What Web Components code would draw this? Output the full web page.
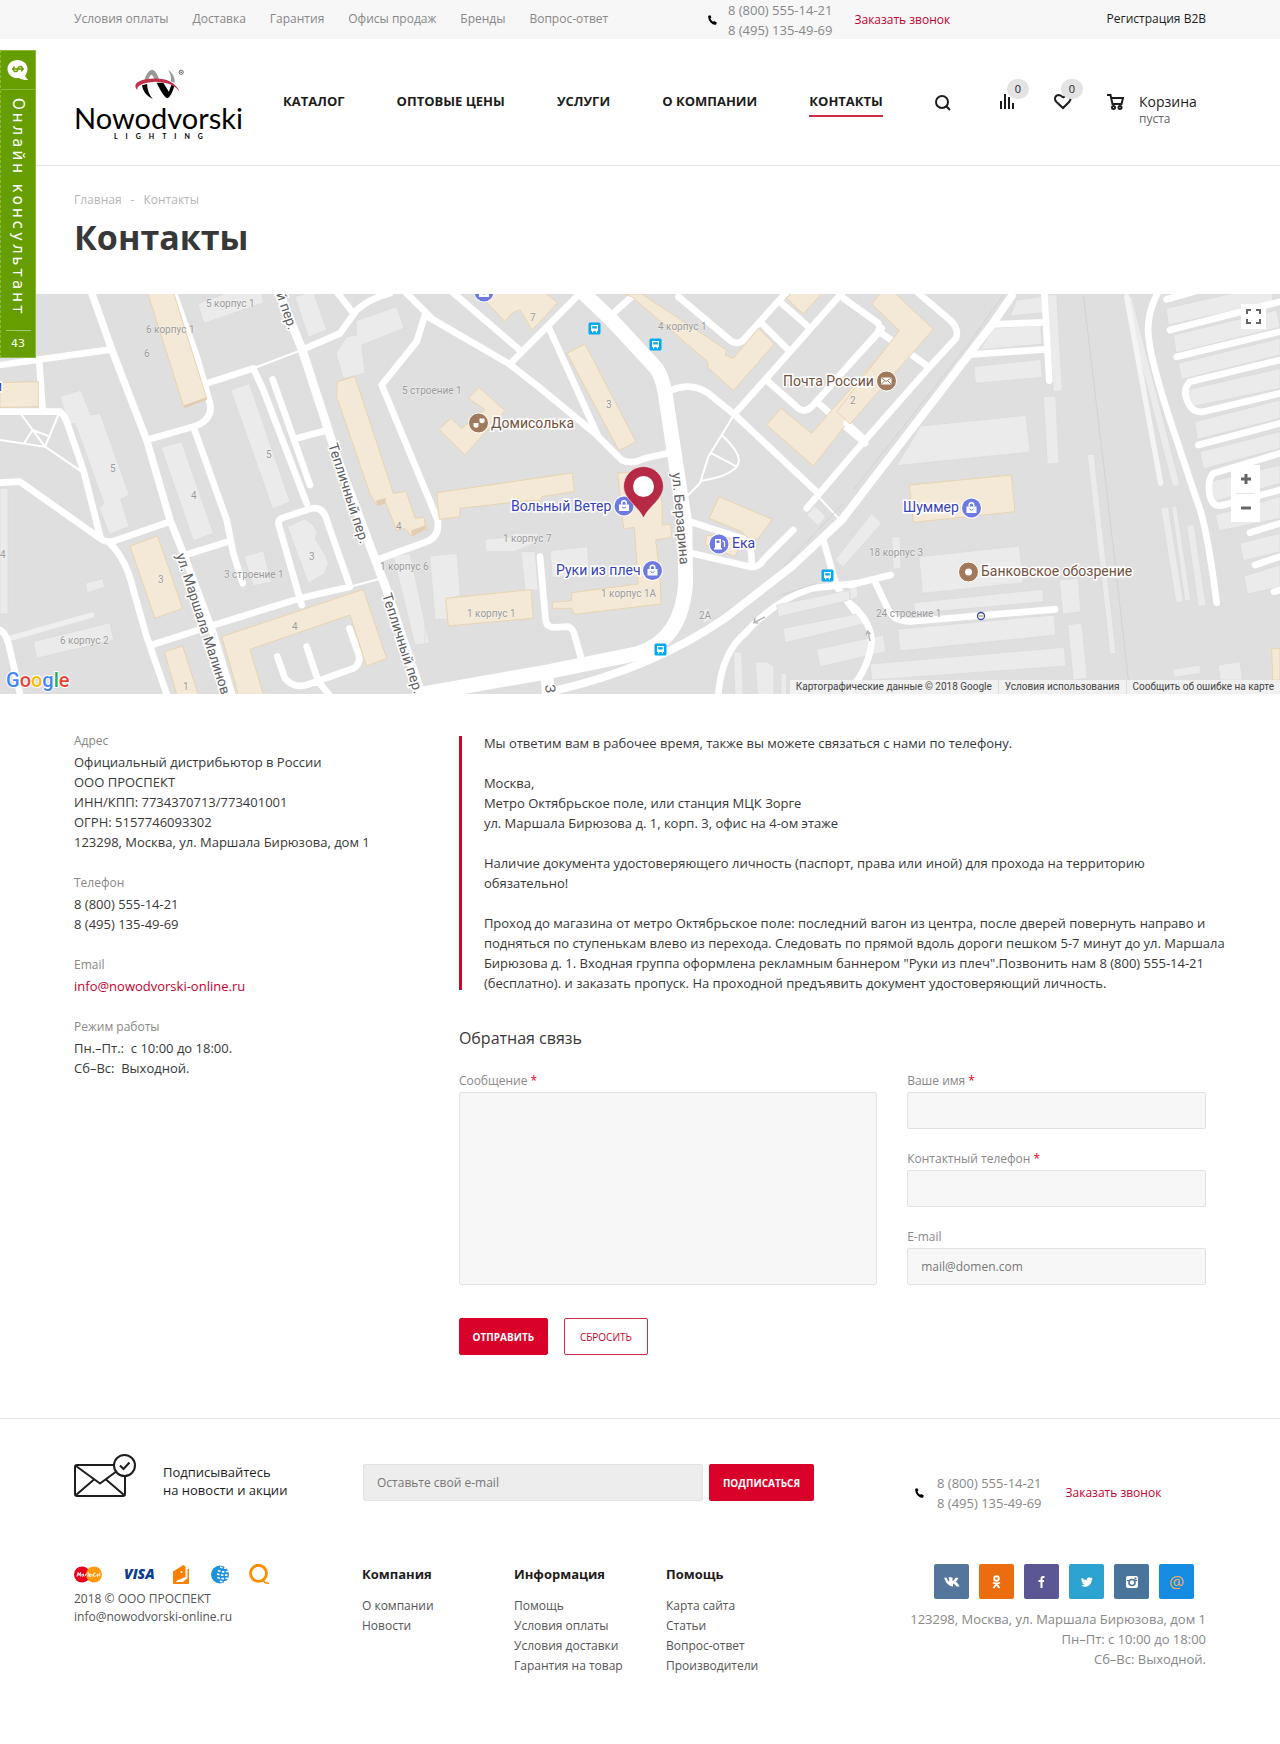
<!DOCTYPE html>
<html lang="ru">
<head>
<meta charset="utf-8">
<meta name="viewport" content="width=device-width, initial-scale=1">
<title>Контакты</title>
<style>
:root{--font:"Open Sans","Noto Sans",sans-serif;--accent:#d90029;--link:#c5002d;--muted:#888;--text:#383838;--line:#e5e5e5;--gutter:74px}
body{margin:0;background:#fff;font:13px/20px var(--font);color:var(--text)}
</style>
</head>
<body>
<contacts-page></contacts-page>
<script>
const define = (name, css, html) => customElements.define(name, class extends HTMLElement {
  constructor() {
    super();
    this.attachShadow({ mode: 'open' }).innerHTML =
      `<style>*{box-sizing:border-box}a{color:inherit;text-decoration:none}ul{list-style:none;margin:0;padding:0}svg{display:block}button,input,textarea{font:inherit}:host{display:block}${css}</style>${html}`;
  }
});

/* phone numbers with a call-back link */
define('phone-block', `
:host{display:flex;align-items:center}
svg{flex:none;margin-right:var(--icon-gap,11px)}
.n{display:grid;color:#888;font-size:13px;line-height:20px;white-space:nowrap}
.c{margin-left:var(--link-gap,22px);font-size:12px;color:var(--link);white-space:nowrap}`,
`<svg width="9" height="10" viewBox="0 0 9 10"><path d="M0.3 0.8 L2.4 0.2 L3.4 2.6 L2.4 3.6 Q3 5.6 5 6.8 L6.2 6 L8.8 7.4 L8.2 9.4 Q5.6 10.4 2.6 7.4 Q-.4 4 .3 .8Z" fill="#000"/></svg>
<span class="n"><a href="#">8 (800) 555-14-21</a><a href="#">8 (495) 135-49-69</a></span><a class="c" href="#">Заказать звонок</a>`);

define('site-topbar', `
:host{background:#f7f7f7;height:39px;padding:0 var(--gutter);display:grid;grid-template-columns:56% 1fr auto;font-size:12px;color:var(--muted)}
ul{display:flex;gap:24px;line-height:38px;white-space:nowrap}
.reg{line-height:38px;color:#1d1d1d}`,
`<nav><ul><li><a href="#">Условия оплаты</a></li><li><a href="#">Доставка</a></li><li><a href="#">Гарантия</a></li><li><a href="#">Офисы продаж</a></li><li><a href="#">Бренды</a></li><li><a href="#">Вопрос-ответ</a></li></ul></nav>
<phone-block></phone-block><a class="reg" href="#">Регистрация B2B</a>`);

define('brand-logo', `
a{display:grid;justify-items:center;width:165px;color:#000}
.w{font:29px/26px Lato,sans-serif}
.l{font:700 7px/10px Lato,sans-serif;letter-spacing:8px;padding-left:8px}
svg{margin-bottom:5px}`,
`<a href="#"><svg width="51" height="31" viewBox="0 0 54 38" preserveAspectRatio="none">
<path d="M11.500 15 Q15 2 20 1 Q24 1 27.500 12 L23 12.500 Q20.500 7 19.500 7 Q17.500 8 16 14Z" fill="#999"/>
<path d="M37 1 Q45 7 44 17 L40 15 Q41 7 37 1Z" fill="#999"/>
<path d="M9.500 20 L15 18.500 Q15 29 21 37 Q10.500 31 9.500 20Z" fill="#000"/>
<path d="M25 17 L32 17 L38 28 L41 18.500 L44 20 Q41 33 36.500 36 Q33 36 25 17Z" fill="#000"/>
<path d="M4.500 26 Q-3 15 18 12 Q42 9.500 49.500 28 Q42 15.500 23 15.500 Q3 17.500 4.500 26Z" fill="#c3304a"/>
<ellipse cx="51" cy="4" rx="2.200" ry="2.600" fill="none" stroke="#555" stroke-width="1"/><circle cx="51" cy="4" r=".9" fill="#555"/></svg>
<span class="w">Nowodvorski</span><span class="l">LIGHTING</span></a>`);

/* header icon with a round counter */
define('count-icon', `
:host{position:relative}
.b{position:absolute;left:7px;top:-15px;min-width:22px;height:20px;border-radius:10px;background:#e3e3e3;color:#1d1d1d;font-size:11px;line-height:20px;text-align:center}`,
`<slot></slot><span class="b">0</span>`);

define('site-header', `
:host{height:127px;border-bottom:1px solid var(--line);padding:0 var(--gutter);display:flex;align-items:flex-start}
brand-logo{margin-top:30px;flex:none}
nav{flex:1;margin:53px 49px 0 44px;display:flex;justify-content:space-between;font-weight:700;font-size:13px;line-height:18px;color:#1d1d1d;white-space:nowrap}
nav a{padding-bottom:5px;height:25px}
nav a.on{border-bottom:2px solid #d02a49}
button{border:0;background:none;padding:0;margin:3px 0 0;height:16px;width:16px}
.t{display:grid;grid-template-columns:54px 53px 99px;margin-top:55px}
.cart{display:flex;gap:15px;font-size:14px;line-height:16px;color:#1d1d1d}
.cart small{display:block;font-size:12px;line-height:18px;color:#666}`,
`<brand-logo></brand-logo>
<nav><a href="#">КАТАЛОГ</a><a href="#">ОПТОВЫЕ ЦЕНЫ</a><a href="#">УСЛУГИ</a><a href="#">О КОМПАНИИ</a><a class="on" href="#">КОНТАКТЫ</a>
<button aria-label="Поиск"><svg width="16" height="16" viewBox="0 0 16 16" fill="none" stroke="#1d1d1d" stroke-width="2"><circle cx="7" cy="7" r="6"/><path d="M11.300 11.300 L15 15"/></svg></button></nav>
<div class="t"><count-icon><svg width="15" height="16" viewBox="0 0 15 16" style="display:block" fill="#1d1d1d"><path d="M0 7h2v8H0zM4 0h2v15H4zM8 3h2v12H8zM12 9h2v6h-2z"/></svg></count-icon>
<count-icon><svg width="18" height="16" viewBox="0 0 18 16" style="display:block" fill="none" stroke="#1d1d1d" stroke-width="2"><path d="M9 3.500 Q7 1 4.600 1 Q1 1.500 1 5 Q1 6.500 2.500 8 L9 14 L15.500 7.500 Q17 5.500 16.500 3.500 Q15 .5 12 1.500 Q10.500 2 9 4"/></svg></count-icon>
<a class="cart" href="#"><svg width="17" height="16" viewBox="0 0 17 16" fill="none" stroke="#1d1d1d" stroke-width="2"><path d="M0 1 H3.500 L5.500 10 H14.500 L16 4 H4.500"/><circle cx="6.500" cy="13.500" r="1.500"/><circle cx="13" cy="13.500" r="1.500"/></svg><span>Корзина<small>пуста</small></span></a></div>`);

define('page-title', `
:host{padding:24px var(--gutter) 0;height:128px}
nav{display:flex;gap:9px;font-size:12px;line-height:20px;color:#b6b6b6}
h1{margin:9px 0 0;font-size:34px;line-height:36px;font-weight:700;color:#383838}`,
`<nav><a href="#">Главная</a><span>-</span><span>Контакты</span></nav><h1>Контакты</h1>`);

/* vertical chat tab */
define('chat-tab', `
:host{position:absolute;left:0;top:50px;width:36px;height:308px;background:#669e02;border:1px solid #8ab73c;border-left:1px dashed #8ab73c;color:#fff}
button{all:unset;box-sizing:border-box;display:flex;flex-direction:column;align-items:center;width:100%;height:100%;cursor:pointer}
.i{height:39px;width:100%;border-bottom:1px solid #8ab73c;display:grid;place-items:center}
.v{writing-mode:vertical-rl;flex:1;font:15px/30px "DejaVu Sans",sans-serif;letter-spacing:3px;white-space:nowrap;padding-top:8px}
.n{width:25px;border-top:1px solid #a5c96a;text-align:center;font:11px/26px "DejaVu Sans",sans-serif}`,
`<button><span class="i"><svg width="22" height="22" viewBox="0 0 22 22"><path d="M10.500 1 C16 1 20.500 4.500 20.500 10 C20.500 13 19 15.500 18 17 L21 21 Q15 21 12 19 C5 20 .5 15 .5 10 C.5 4.500 5 1 10.500 1Z" fill="#fff"/><path d="M5 10 H17 M7.500 7.500 Q5 11.500 8 12.500 Q10.500 13 11 10 Q11.500 7 14 7.500 Q16.500 8.500 14.500 12.500" fill="none" stroke="#669e02" stroke-width="1.500"/></svg></span>
<span class="v">Онлайн консультант</span><span class="n">43</span></button>`);

define('contacts-map', `
:host{position:relative;height:400px;background:#dfdfdf;overflow:hidden}
.map{width:100%;height:400px}
.r{fill:none;stroke:#fff;stroke-width:20;stroke-linecap:round;stroke-linejoin:round}
.g{fill:#ebebeb;stroke:#d9d9d9;stroke-width:2}
.y{fill:#f3e9d6;stroke:#e9d3b0;stroke-width:3}
.s{font:10px Roboto,sans-serif;fill:#999;stroke:#fff;stroke-width:1px;paint-order:stroke;stroke-opacity:.5}
.p{font:14px Roboto,sans-serif;stroke:#fff;stroke-width:3px;paint-order:stroke}
.st{font:14px Roboto,sans-serif;fill:#5f5f5f;stroke:#fff;stroke-width:3px;paint-order:stroke}
.b{fill:#3642b8}.w{fill:#74523d}
.lg{font:500 20px Roboto,sans-serif;stroke:#fff;stroke-width:2px;paint-order:stroke}
.full,.zoom{position:absolute;right:14px;background:#fff}
button{border:0;padding:0;background:#fff;display:grid;place-items:center}
.full{top:10px;width:25px;height:25px}
.zoom{top:171px;right:20px;width:29px}
.zoom button{width:29px;height:28px}
.zoom hr{margin:0 5px;border:0;border-top:1px solid #e6e6e6}
.legal{position:absolute;right:0;bottom:0;display:flex;height:14px;background:rgba(245,245,245,.8);font:10px/14px Roboto,sans-serif;color:#444;white-space:nowrap}
.legal a{padding:0 6px}.legal a+a{border-left:1px solid #ddd}`,
`<svg class="map" viewBox="0 0 1280 400" preserveAspectRatio="xMidYMid slice">
<defs>
<g id="bus"><rect x="-6" y="-6" width="12" height="12" rx="1.500" fill="#03a9f4"/><path d="M-3.500 -3.500h7v6h-1v1.500h-1.300v-1.500h-2.400v1.500h-1.300v-1.500h-1z" fill="#fff"/><path d="M-2.300 -2.300h4.600v2.300h-4.600z" fill="#03a9f4"/></g>
<g id="bag"><circle r="10.500" fill="#fff"/><circle r="9.500" fill="#6f7ae0"/><path d="M-5 -1.500h10v6.500h-10z" fill="#fff"/><path d="M-2.300 -1.500v-1.500a2.300 2.300 0 0 1 4.600 0v1.500" fill="none" stroke="#fff" stroke-width="1.500"/><path d="M-2 1q2 2.500 4 0" fill="none" stroke="#6f7ae0"/></g>
</defs>
<g transform="translate(0 -4) scale(.33333)">
 <g class="g">
  <path d="M593 40L680 10H785L792 38L612 100ZM885 20L940 5L980 120L925 142ZM1068 92L1190 50L1212 115L1085 165L1095 250L1030 265L1008 190L1040 140L1070 135ZM180 320L242 300L272 375L300 370L388 615L362 628L387 710L328 732L298 655L312 640L225 400L208 405ZM483 472L545 455L640 730L580 752ZM692 300L748 280L870 635L818 657ZM0 595H24V972H0ZM255 880L308 866L314 892L262 908ZM100 1055L330 998L341 1050L110 1105ZM732 800L790 782L815 875L760 888ZM862 710L915 686L940 705L952 730L945 745L978 800L985 820L975 850L925 880ZM1180 800L1230 790L1288 1060L1245 1065Z"/>
 </g>
 <g class="r">
  <path stroke="#efefef" stroke-width="16" d="M30 1045L275 975"/>
  <path stroke-width="6" d="M65 375L98 420L135 470L245 545M175 375L135 470L0 450M98 420L72 460M98 420L150 440M760 235L905 180M1050 890L1135 868"/>
  <path d="M272 0L335 178L440 450L510 690L550 790L640 1030L700 1230" stroke-width="22"/>
  <path d="M0 225L335 178M118 220L128 360M0 365H180Q192 375 200 395L250 540L302 745M0 578L60 575L300 745Q320 760 345 752L510 695M330 760Q380 810 400 900L440 1040L500 1212M455 1065L610 1015L900 925L1050 890M440 450L580 410Q640 390 630 340L590 200L518 0M580 410L680 690L700 790L728 880M555 795L685 755M620 280L760 235L790 300L920 640M905 180L1020 130L1070 60Q1110 25 1170 10M1010 5L1060 70M818 268L930 585M890 445L985 420M905 945L835 700Q835 687 850 683L935 655Q970 650 980 690L1050 890M832 1100L855 1165Q880 1195 920 1185L1060 1135Q1085 1120 1075 1090L1048 1015M920 1070L955 1175L1000 1230M0 1020Q20 1030 30 1080L60 1212M1210 0L1290 80M1275 75L1250 155L1145 285L1313 690Q1320 740 1280 755L1130 810"/>
  <path stroke-width="26" d="M830 -10L905 175L985 420L1010 500L1100 740L1160 900L1270 1230"/>
 </g>
 <g class="y">
  <path d="M440 0L520 5L620 325L552 352ZM0 278L115 275V350L0 352ZM390 768L473 738L548 955L465 985ZM493 1085L548 1068L600 1230H535ZM665 1040L1090 898L1160 1105L1100 1128L1050 975L750 1078L795 1230H720ZM1012 275L1065 260L1180 610L1218 604L1246 685L1272 682L1280 715L1236 738L1215 715L1190 722L1158 640L1130 645L1110 612L1010 320Z"/>
  <path d="M552 346L620 322V330L554 354ZM1128 632L1157 624V640L1132 648ZM1232 722L1280 704V716L1238 738Z" fill="#e3cdb2" stroke="none"/>
 </g>
</g>
<g transform="translate(425 -4) scale(.33333)">
 <g class="g">
  <path d="M180 748L262 740V730H340V755L268 785H182ZM14 798L96 790L106 915L66 930L70 988H30ZM288 785H330L340 900H300ZM375 782L488 770L492 850L382 862ZM1145 675L1170 648L1202 680L1180 708ZM830 962L850 955L860 990L835 1000ZM925 1086H950L955 1230H930ZM990 1116H1025L1047 1130V1230H1000ZM1068 1150H1085V1230H1068ZM1230 810L1340 670L1370 700L1255 830ZM0 1000L14 1060H0Z"/>
 </g>
 <g class="r">
  <path stroke-width="6" d="M930 370L850 500L825 580L790 615M890 435Q960 500 935 530Q910 560 830 572M860 490L935 530M1180 620L1245 690"/>
  <path stroke-width="44" d="M455 -10L560 90L690 230Q715 260 725 340L780 700L782 880Q770 1050 640 1090L370 1145L-10 1212"/>
  <path stroke-width="38" d="M365 1150L370 1212"/>
  <path d="M0 75L250 220L340 290L510 430L590 510Q620 525 660 505L735 488M75 0L290 185M255 222L450 25L475 0M370 110L520 440M740 300Q800 275 850 310L930 375L1180 610M1250 10L1015 275L930 370M1065 35L1150 110M1010 100L1090 180M760 20L920 155Q945 165 960 145L1090 0M570 65L620 20M1030 275L1120 355Q1140 370 1160 350L1370 115M1180 340L1320 460M795 695L965 750Q982 770 980 830M800 790L975 830Q1000 835 1015 810L1105 720M345 800L362 990Q365 1015 390 1012L430 1010Q445 1015 450 1040L470 1110M1195 750L1235 890L1290 965M1290 880L1160 895Q1050 930 960 1030Q890 1090 880 1212"/>
 </g>
 <g class="y">
  <path d="M150 0H350L398 38L322 120L285 60L262 68L240 95ZM426 190L480 162L633 455L582 482ZM130 325L162 292L240 362L120 495L42 418L78 385L110 415L180 358ZM35 608L442 549L448 605L350 620V632H310L105 655V680L43 688ZM595 12H650L905 180L900 195L925 205L1000 115L1048 162L925 302L848 232V215L620 20ZM1025 405L1068 355L1160 430L1370 190L1400 230L1165 528ZM1085 25L1110 0H1200L1135 72ZM578 549L690 545L712 640V705L736 702L740 742L692 750L705 850L708 942L448 973L440 955L382 955V937L440 932V908L640 882L628 712L596 717ZM853 685L882 620L1042 688L1000 745L980 755L950 725ZM845 735L950 750L930 800L840 765ZM62 925L318 899L325 985L70 1008ZM0 690L5 720H0Z"/>
 </g>
</g>
<g transform="translate(850 -4) scale(.33333)">
 <path d="M460 15L350 170L10 600M-20 640L-200 830M700 15L770 600L840 1212M-100 880L-220 920" fill="none" stroke="#d2d2d2" stroke-width="3"/>
 <g class="g">
  <path d="M500 30L575 20L578 68L480 78ZM430 115L572 105L576 162L390 180ZM372 230L572 208L577 262L376 280ZM212 408L528 376L540 486L140 527ZM580 320L617 318L627 520L592 522ZM590 15H620L637 302L610 305ZM712 494L732 492L798 1090L780 1092ZM125 740H150L153 835L130 838ZM207 800L508 768L520 878L217 910ZM190 938L578 898L582 935L195 970ZM143 1018L612 975L617 1035L150 1083ZM60 1122L643 1072L648 1128L65 1170ZM628 870L685 865L692 965L638 972ZM653 1005L695 998L712 1165L670 1170ZM932 655L955 650L1000 935L978 938ZM965 650L980 648L1022 930L1005 935ZM1010 706L1032 704L1068 946L1045 950ZM820 15L845 20L990 585L968 590ZM968 1138L1050 1125L1052 1150L972 1162ZM1105 1125L1170 1115L1178 1170H1110ZM948 55L1260 -15L1270 35L955 105ZM970 135L1280 60L1290 112L978 188ZM985 220L1290 145V195L995 268ZM1010 300L1290 235V295L1025 350ZM1035 395L1290 330V385L1042 448ZM1050 485L1290 425V475L1060 537ZM1080 575L1290 525V580L1092 635ZM1097 675L1290 620V685L1107 722ZM1170 760L1290 730V785L1180 812ZM1182 858L1290 825V890L1192 912ZM0 885L20 880L24 920L0 930ZM-220 945L0 900V930L-215 980ZM-200 1015L40 968L48 1000L-195 1058ZM-100 1078L100 1035L108 1085L-90 1130Z"/>
 </g>
 <g class="r">
  <path stroke="#f4f4f4" stroke-width="16" d="M830 20L932 580"/>
  <path stroke-width="24" d="M485 18L425 105L-25 690L-175 830L-375 985Q-600 1140 -900 1205"/>
  <path d="M-130 655L15 485L235 235L318 145Q328 115 300 90L200 5M-20 25L85 100Q95 120 75 140L0 220M95 130L235 230M-10 400L45 450M430 103L585 97M370 193L585 178M583 10L598 272M0 885L122 855M75 875L115 960Q135 1000 200 993L615 958M925 5Q885 80 897 150Q905 220 960 390L1040 630Q1070 700 1100 938M950 28L1050 0M960 120L1290 35M980 200L1290 125M1290 210L1020 275Q995 300 1015 340Q1030 370 1060 365L1290 310M1045 465L1290 400M1290 490L1090 550Q1070 570 1080 620Q1090 655 1120 645L1290 600M1200 728L1290 700M1215 825L1290 800M1272 905L1290 900M0 940Q60 990 65 1050Q60 1130 0 1200"/>
 </g>
 <g class="y"><path d="M65 42L95 5H130L250 118L0 402L-40 365L148 122ZM178 585L484 555L495 665L190 697ZM1265 1076H1290V1170H1268Z"/></g>
</g>
<g class="s">
 <text x="206" y="13">5 корпус 1</text><text x="146" y="39">6 корпус 1</text><text x="144" y="63">6</text><text x="402" y="100">5 строение 1</text><text x="110" y="178">5</text><text x="191" y="205">4</text><text x="266" y="164">5</text><text x="158" y="289">3</text><text x="0" y="264">4</text><text x="224" y="284">3 строение 1</text><text x="309" y="266">3</text><text x="380" y="276">1 корпус 6</text><text x="60" y="350">6 корпус 2</text><text x="292" y="336">4</text><text x="396" y="236">4</text><text x="183" y="396">1</text><text x="530" y="27">7</text><text x="658" y="36">4 корпус 1</text><text x="606" y="114">3</text><text x="850" y="110">2</text><text x="503" y="248">1 корпус 7</text><text x="467" y="323">1 корпус 1</text><text x="601" y="303">1 корпус 1А</text><text x="699" y="325">2А</text><text x="869" y="262">18 корпус 3</text><text x="876" y="323">24 строение 1</text>
</g>
<g class="st">
 <text transform="translate(276 0) rotate(71)">й пер.</text>
 <text transform="translate(328 151) rotate(72)">Тепличный пер.</text>
 <text transform="translate(382 301) rotate(72)">Тепличный пер.</text>
 <text transform="translate(176 261) rotate(72)">ул. Маршала Малиновского</text>
 <text transform="translate(672 179) rotate(85)">ул. Берзарина</text>
 <text transform="translate(545 391) rotate(84)">З</text>
</g>
<g class="p b"><text x="511" y="217">Вольный Ветер</text><text x="556" y="281">Руки из плеч</text><text x="732" y="254">Ека</text><text x="903" y="218">Шуммер</text><text x="-6" y="97">и</text></g>
<g class="p w"><text x="491" y="134">Домисолька</text><text x="783" y="92">Почта России</text><text x="981" y="282">Банковское обозрение</text></g>
<use href="#bag" x="484" y="-2"/><use href="#bag" x="624" y="212"/><use href="#bag" x="652.500" y="276.500"/><use href="#bag" x="971.500" y="214"/>
<g transform="translate(719 250)"><circle r="10.500" fill="#fff"/><circle r="9.500" fill="#6f7ae0"/><path d="M-4 -5h6v9h1v1.500h-8v-1.500h1z" fill="#fff"/><path d="M-2.500 -3.500h3v2.500h-3z" fill="#6f7ae0"/><path d="M3.500 -3.500l2 1.500v5" fill="none" stroke="#fff" stroke-width="1.300"/></g>
<g fill="#a1795c" stroke="#fff"><circle cx="478.500" cy="129" r="10"/><circle cx="886.500" cy="87" r="10"/><circle cx="968.500" cy="278" r="10"/></g>
<path d="M473.500 129h5v3.500q-2.500 2.500-5 0zM479.500 124.500h5v3.500q-2.500 2.500-5 0z" fill="#fff"/>
<path d="M881 83.500h10.500v7h-10.500z" fill="#fff"/><path d="M881 83.500l5.200 4 5.300-4M881 90.500l4-4M891.500 90.500l-4-4" fill="none" stroke="#a1795c"/>
<circle cx="968.500" cy="278" r="3.500" fill="#fff"/>
<use href="#bus" x="594.500" y="34.500"/><use href="#bus" x="655.500" y="50.500"/><use href="#bus" x="827.500" y="281.500"/><use href="#bus" x="660.500" y="355.500"/>
<circle cx="981" cy="322" r="3.500" fill="#fff" stroke="#3949ab" stroke-width="1.300"/><path d="M979 322h4" stroke="#a1795c"/>
<path d="M765 323l-10 5m0-4l-1 4.500 4.500 .5M870 347l-2-9m-2 3l1.500-4 3 3" fill="none" stroke="#b5b5b5" stroke-width="1.500"/>
<path d="M643.500 224 C638 212 623.500 205 623.500 192.500 A20 20 0 0 1 663.500 192.500 C663.500 205 649 212 643.500 224Z" fill="#b62a46" stroke="#eee" stroke-opacity=".7"/><circle cx="643.500" cy="192.500" r="10.500" fill="#fff"/>
<text class="lg" x="6" y="393"><tspan fill="#4285f4">G</tspan><tspan fill="#ea4335">o</tspan><tspan fill="#fbbc05">o</tspan><tspan fill="#4285f4">g</tspan><tspan fill="#34a853">l</tspan><tspan fill="#ea4335">e</tspan></text>
</svg>
<button class="full" aria-label="Во весь экран"><svg width="15" height="15" fill="none" stroke="#666" stroke-width="2"><path d="M1 5V1h4M10 1h4v4M14 10v4h-4M5 14H1v-4"/></svg></button>
<div class="zoom"><button aria-label="Приблизить"><svg width="10" height="10" stroke="#666" stroke-width="3"><path d="M0 5h10M5 0v10"/></svg></button><hr><button aria-label="Отдалить"><svg width="10" height="10" stroke="#666" stroke-width="3"><path d="M0 5h10"/></svg></button></div>
<div class="legal"><a href="#">Картографические данные © 2018 Google</a><a href="#">Условия использования</a><a href="#">Сообщить об ошибке на карте</a></div>`);

define('info-item', `
:host{margin-bottom:20px}
.h{font-size:12px;line-height:22px;color:var(--muted)}`,
`<div class="h"><slot name="label"></slot></div><slot></slot>`);

define('office-note', `
:host{display:flex;gap:22px;margin-right:-24px}
i{flex:none;width:3px;margin:3px 0;background:var(--accent)}
p{margin:0 0 20px}p:last-child{margin:0}`,
`<i></i><div><p>Мы ответим вам в рабочее время, также вы можете связаться с нами по телефону.</p>
<p>Москва,<br>Метро Октябрьское поле, или станция МЦК Зорге<br>ул. Маршала Бирюзова д. 1, корп. 3, офис на 4-ом этаже</p>
<p>Наличие документа удостоверяющего личность (паспорт, права или иной) для прохода на территорию<br>обязательно!</p>
<p>Проход до магазина от метро Октябрьское поле: последний вагон из центра, после дверей повернуть направо и<br>подняться по ступенькам влево из перехода. Следовать по прямой вдоль дороги пешком 5-7 минут до ул. Маршала<br>Бирюзова д. 1. Входная группа оформлена рекламным баннером "Руки из плеч".Позвонить нам 8 (800) 555-14-21<br>(бесплатно). и заказать пропуск. На проходной предъявить документ удостоверяющий личность.</p></div>`);

define('feedback-form', `
:host{margin-top:35px}
h2{margin:0;font-size:16px;line-height:20px;font-weight:500;color:#383838}
.g{display:grid;grid-template-columns:7fr 5fr;gap:30px;margin-top:21px}
.f{display:flex;flex-direction:column}
.c{display:grid;gap:18px}
label{font-size:12px;line-height:23px;color:var(--muted)}
b{font-weight:400;color:#e2001f}
input,textarea{display:block;width:100%;height:37px;margin:0;padding:0 13px;border:1px solid #e2e2e2;border-radius:2px;background:#f7f7f7;font-size:12px;color:#333}
textarea{flex:1;resize:none}
::placeholder{color:#777;opacity:1}
.a{display:flex;gap:16px;margin-top:33px}
button{height:37px;min-width:89px;padding:0;border:1px solid var(--accent);border-radius:2px;background:var(--accent);color:#fff;font-size:10px;font-weight:700}
button[type=reset]{min-width:84px;background:#fff;border-color:#d02a49;color:var(--link);font-weight:500}`,
`<h2>Обратная связь</h2><form><div class="g"><div class="f"><label for="m">Сообщение <b>*</b></label><textarea id="m"></textarea></div>
<div class="c"><div class="f"><label for="n">Ваше имя <b>*</b></label><input id="n"></div><div class="f"><label for="p">Контактный телефон <b>*</b></label><input id="p" type="tel"></div><div class="f"><label for="e">E-mail</label><input id="e" type="email" placeholder="mail@domen.com"></div></div></div>
<div class="a"><button type="button">ОТПРАВИТЬ</button><button type="reset">СБРОСИТЬ</button></div></form>`);

define('contacts-main', `
:host{display:grid;grid-template-columns:34% 66%;padding:36px var(--gutter) 63px}
a{color:var(--link)}
.r{padding-top:3px}`,
`<section><info-item><span slot="label">Адрес</span>Официальный дистрибьютор в России<br>ООО ПРОСПЕКТ<br>ИНН/КПП: 7734370713/773401001<br>ОГРН: 5157746093302<br>123298, Москва, ул. Маршала Бирюзова, дом 1</info-item>
<info-item><span slot="label">Телефон</span>8 (800) 555-14-21<br>8 (495) 135-49-69</info-item>
<info-item><span slot="label">Email</span><a href="#">info@nowodvorski-online.ru</a></info-item>
<info-item><span slot="label">Режим работы</span>Пн.–Пт.:&nbsp; с 10:00 до 18:00.<br>Сб–Вс:&nbsp; Выходной.</info-item></section>
<section class="r"><office-note></office-note><feedback-form></feedback-form></section>`);

define('social-links', `
:host{display:flex;gap:10px}
a{width:35px;height:35px;border-radius:2px;display:grid;place-items:center}
a span{font:17px/20px var(--font);color:#f2b05c}`,
`<a href="#" aria-label="VK" style="background:#54769c"><svg width="16" height="10" viewBox="0 0 16 10" fill="#fff"><path d="M0 .8h2.600q1 3 2.600 4.200V1.800L4.400.6Q6 0 8.500.5V4.200Q10 3.500 11.600.8h2.800Q14.500 2 12 4.800q3 2.800 3.600 4.600h-3q-1.800-2.400-3.600-3v3Q3.500 10 0 .8Z"/></svg></a>
<a href="#" aria-label="OK" style="background:#ec6c10"><svg width="9" height="14" viewBox="0 0 9 14" fill="none" stroke="#fff" stroke-width="1.900"><circle cx="4.500" cy="3.500" r="2.300"/><path d="M1 7.500q3.500 2 7 0M4.500 9l-3 4M4.500 9l3 4"/></svg></a>
<a href="#" aria-label="Facebook" style="background:#5b5794"><svg width="7" height="12" viewBox="0 0 7 12" fill="none" stroke="#fff" stroke-width="2"><path d="M6.500 1H5Q3.500 1 3.500 3v9M.5 5h5.500"/></svg></a>
<a href="#" aria-label="Twitter" style="background:#2ca3d1"><svg width="12" height="10" viewBox="0 0 12 10" fill="#fff"><path d="M.6.8Q3 3.200 5.800 3.200 5.500 .3 8 .2 9 .2 9.800.9L11.300.4 10.600 1.700 11.900 1.500 10.800 2.800Q10.500 8 6 9.500 3 10.300 0 8.500 2 8.500 3.400 7.600 1.600 7.200 1.200 6h1Q.5 5 .3 3.300l1 .2Q0 2.200.6.8Z"/></svg></a>
<a href="#" aria-label="Instagram" style="background:#49749b"><svg width="12" height="12" viewBox="0 0 12 12"><rect width="12" height="12" rx="2" fill="#fff"/><path d="M1 4.500H3M9 4.500h2" stroke="#49749b"/><circle cx="6" cy="6.500" r="3" fill="#fff" stroke="#49749b" stroke-width="1.600"/><path d="M8.500 1.500h2v2h-2z" fill="#49749b"/></svg></a>
<a href="#" style="background:#158be2"><span>@</span></a>`);

define('pay-icons', `
:host{display:grid;grid-template-columns:50px 49px 38px 38px auto;align-items:center;height:20px}
.v{display:flex;font:italic 800 14px/16px var(--font);color:#0b3c91}`,
`<svg width="28" height="17" viewBox="0 0 28 17"><circle cx="8" cy="8.500" r="8" fill="#eb001b"/><circle cx="20" cy="8.500" r="8" fill="#ff9a0e"/><path d="M3 10.500l1.200-4 .8 3 1.500-3 .3 4M9.500 8q-1.800 0-1.500 1.500t1.500.5v-2M12.500 8q-1.300-.3-1 .8t-1 1.500M14.200 6.500v4M15.500 9.300q2 0 1-1.200t-1.200 1.200 1.700 1M18 10.500V8.200M21.500 7q-2.300-.5-2 2t2 1M24 8q-1.500.5-1 1.800t1 .2v-2M25.800 6.500v4" fill="none" stroke="#fff" stroke-width="1"/></svg>
<span class="v">VISA</span>
<svg width="17" height="19" viewBox="0 0 17 19" fill="#ff7f00"><path d="M0 6.500L10.500 0 12.500 1.500V12L4 15.500 3 17H10L14.500 13V4H16V18Q16 19 15 19H1Q0 19 0 18Z"/><circle cx="8.500" cy="7" r="1" fill="#fff"/></svg>
<svg width="19" height="19" viewBox="0 0 19 19"><circle cx="9" cy="9.500" r="9" fill="#1f90e0"/><g fill="none" stroke="#fff" stroke-width="1.600" stroke-dasharray="2.500 1.500"><path d="M9 2Q15 4 18 2.500M7 5.500Q13 8 18 6M6 9Q12 11 18 9.500M6.500 12.500Q12 14.500 17 13M9 16Q12 17.500 15 16.500"/></g></svg>
<svg width="21" height="20" viewBox="0 0 21 20" fill="none" stroke="#ff8c00"><ellipse cx="9.500" cy="9.300" rx="8" ry="8" stroke-width="2.800"/><path d="M13 15l3 3.500 4 1" stroke-width="1.600"/></svg>`);

define('site-footer', `
:host{border-top:1px solid var(--line);padding:35px var(--gutter) 67px}
.t{display:grid;grid-template-columns:289fr 451fr 392fr;height:60px}
.s{display:flex;gap:27px;line-height:18px;color:#1d1d1d}
.s p{margin:9px 0 0}
form{display:flex;gap:6px;padding-top:10px}
input{flex:1;min-width:0;height:37px;padding:0 13px;border:1px solid #e2e2e2;border-radius:2px;background:#ededed;font-size:12px}
::placeholder{color:#777;opacity:1}
button{height:37px;width:105px;padding:0;border:0;border-radius:2px;background:var(--accent);color:#fff;font-size:10px;font-weight:700}
phone-block{padding-left:101px;height:40px;margin-top:19px;--icon-gap:13px;--link-gap:24px}
.b{display:grid;grid-template-columns:288fr 152fr 152fr 540fr;margin-top:50px}
.c{font-size:12px;line-height:18px;color:#555}
.c p{margin:6px 0 0}
h3{margin:0;font-size:13px;line-height:20px;font-weight:700;color:#1d1d1d}
.l{font-size:12px;color:#555}.l ul{margin-top:12px}
.e{display:flex;justify-content:space-between}
.a{display:grid;justify-items:end;text-align:right;font-size:13px;color:var(--muted);align-content:start}
social-links{margin-right:12px}
address{font-style:normal;margin-top:10px}`,
`<div class="t"><div class="s"><svg width="62" height="43" viewBox="0 0 62 43" fill="none" stroke="#1d1d1d" stroke-width="2"><path d="M40 11H3Q1 11 1 13V40Q1 42 3 42H49Q51 42 51 40V23M2 12L26 29.500 43 17M2 41L20 25.500M50 41L32 25.500" stroke-linejoin="round"/><circle cx="50.500" cy="11.500" r="10.500"/><path d="M46 11.500L49.500 15 55.500 8.500"/></svg><p>Подписывайтесь<br>на новости и акции</p></div>
<form><input type="email" aria-label="E-mail" placeholder="Оставьте свой e-mail"><button type="button">ПОДПИСАТЬСЯ</button></form><phone-block></phone-block></div>
<div class="b"><div class="c"><pay-icons></pay-icons><p>2018 © ООО ПРОСПЕКТ<br><a href="#">info@nowodvorski-online.ru</a></p></div>
<div class="l"><h3>Компания</h3><ul><li><a href="#">О компании</a></li><li><a href="#">Новости</a></li></ul></div>
<div class="l"><h3>Информация</h3><ul><li><a href="#">Помощь</a></li><li><a href="#">Условия оплаты</a></li><li><a href="#">Условия доставки</a></li><li><a href="#">Гарантия на товар</a></li></ul></div>
<div class="l e"><div><h3>Помощь</h3><ul><li><a href="#">Карта сайта</a></li><li><a href="#">Статьи</a></li><li><a href="#">Вопрос-ответ</a></li><li><a href="#">Производители</a></li></ul></div>
<div class="a"><social-links></social-links><address>123298, Москва, ул. Маршала Бирюзова, дом 1<br>Пн–Пт: с 10:00 до 18:00<br>Сб–Вс: Выходной.</address></div></div></div>`);

define('contacts-page', `:host{position:relative}`,
`<site-topbar></site-topbar><site-header></site-header><page-title></page-title><contacts-map></contacts-map><contacts-main></contacts-main><site-footer></site-footer><chat-tab></chat-tab>`);
</script>
</body>
</html>
